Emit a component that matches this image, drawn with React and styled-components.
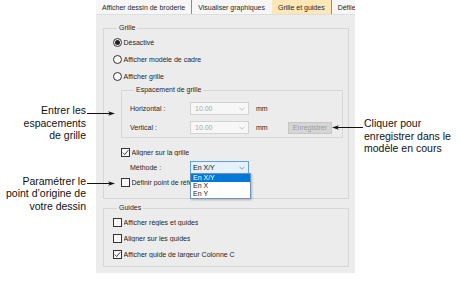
import React from "react";
import styled, { createGlobalStyle } from "styled-components";

const GlobalStyle = createGlobalStyle`
  body {
    margin: 0;
    background: #fff;
  }
`;

const Page = styled.div`
  display: flex;
  width: 461px;
  height: 288px;
  overflow: hidden;
  font-family: "Liberation Sans", Arial, sans-serif;
`;

const NotesLeft = styled.div`
  width: 88px;
  flex: none;
  box-sizing: border-box;
  padding: 104px 2px 0 0;
  display: flex;
  flex-direction: column;
  align-items: flex-end;
  gap: 33px;
`;

const NotesRight = styled.div`
  flex: 1;
  padding: 117px 0 0 9px;
`;

const Note = styled.div`
  position: relative;
  font-size: 10.5px;
  line-height: 12.5px;
  color: #111;
  white-space: nowrap;
  text-align: ${(p) => (p.$side === "left" ? "right" : "left")};
`;

const ArrowSvg = styled.svg`
  position: absolute;
  top: ${(p) => p.$top}px;
  ${(p) =>
    p.$side === "left"
      ? "left: calc(100% + 1px);"
      : "right: calc(100% + 1px); transform: scaleX(-1);"}
`;

const Dialog = styled.div`
  flex: none;
  align-self: flex-start;
  width: 259px;
  margin-left: 8px;
  background: #ececec;
  font-size: 7px;
  color: #1f1f1f;
`;

const TabBar = styled.div`
  display: flex;
  height: 15px;
  box-sizing: border-box;
  background: #f6f6f6;
  border-bottom: 1px solid #dedede;
  overflow: hidden;
  white-space: nowrap;
`;

const Tab = styled.div`
  display: flex;
  align-items: center;
  flex: none;
  padding: 0 6px;
  background: ${(p) => (p.$active ? "#fde7b7" : "transparent")};
  border-right: 1px solid ${(p) => (p.$sep ? "#8c8c8c" : "transparent")};
`;

const Body = styled.div`
  display: flex;
  flex-direction: column;
  gap: 5px;
  padding: 9px 6px 6px 7px;
`;

const Group = styled.fieldset`
  margin: ${(p) => (p.$inset ? "1.5px 0 0 8px" : "0")};
  padding: ${(p) => p.$pad};
  border: 1px solid #d6d6d6;
  min-width: 0;
`;

const Legend = styled.legend`
  margin-left: 4px;
  padding: 0 2px;
  font-size: 7px;
  line-height: 8px;
`;

const Row = styled.div`
  position: relative;
  display: flex;
  align-items: center;
  height: ${(p) => p.$h}px;
  margin-left: ${(p) => p.$indent || 0}px;
  margin-top: ${(p) => p.$top || 0}px;
  white-space: nowrap;
`;

const RadioDot = styled.span`
  flex: none;
  display: flex;
  align-items: center;
  justify-content: center;
  width: 9px;
  height: 9px;
  box-sizing: border-box;
  margin-right: 1.5px;
  border: 1px solid #333;
  border-radius: 50%;
  background: #f8f8f8;
  &::after {
    content: "";
    width: 5px;
    height: 5px;
    border-radius: 50%;
    background: ${(p) => (p.$on ? "#222" : "transparent")};
  }
`;

const Box = styled.span`
  flex: none;
  display: flex;
  align-items: center;
  justify-content: center;
  width: 9px;
  height: 9px;
  box-sizing: border-box;
  margin-right: 1.5px;
  border: 1px solid #333;
  background: #f8f8f8;
`;

const Caption = styled.span`
  overflow: hidden;
  max-width: ${(p) => (p.$clip ? `${p.$clip}px` : "none")};
`;

const FieldLabel = styled.span`
  flex: none;
  width: 60px;
`;

const Combo = styled.div`
  position: relative;
  flex: none;
  display: flex;
  align-items: center;
  width: 59px;
  height: 13px;
  box-sizing: border-box;
  padding: 0 3px 0 ${(p) => (p.$focus ? 2 : 4)}px;
  border: 1px solid ${(p) => (p.$focus ? "#5fa0df" : "#d3d3d3")};
  background: ${(p) => (p.$focus ? "#e5f1fb" : "#f7f7f7")};
  color: ${(p) => (p.$disabled ? "#a8a8a8" : "#111")};
  z-index: 1;
`;

const Chevron = styled.svg`
  margin-left: auto;
`;

const Unit = styled.span`
  margin-left: 7px;
`;

const Button = styled.button`
  margin-left: auto;
  height: 12px;
  padding: 0 4px;
  font-family: inherit;
  font-size: 7px;
  line-height: 10px;
  color: #9d9d9d;
  background: #d5d5d5;
  border: 1px solid #c6c6c6;
`;

const DropList = styled.div`
  position: absolute;
  top: 100%;
  left: -1px;
  width: 61px;
  box-sizing: border-box;
  background: #fff;
  border: 1px solid #6f93bb;
  box-shadow: 1px 1px 2px rgba(0, 0, 0, 0.25);
`;

const DropItem = styled.div`
  height: 8px;
  line-height: 8px;
  padding: 0 2px;
  background: ${(p) => (p.$sel ? "#0078d7" : "transparent")};
  color: ${(p) => (p.$sel ? "#fff" : "#1a1a1a")};
`;

function Arrow({ side, length, top }) {
  return (
    <ArrowSvg $side={side} $top={top} width={length} height="7" viewBox={`0 0 ${length} 7`}>
      <line x1="0" y1="3.5" x2={length - 3} y2="3.5" stroke="#111" strokeWidth="1" />
      <polygon
        points={`${length - 7},1.2 ${length},3.5 ${length - 7},5.8 ${length - 5},3.5`}
        fill="#111"
      />
    </ArrowSvg>
  );
}

function Radio({ on, children }) {
  return (
    <Row $h={17}>
      <RadioDot $on={on} />
      {children}
    </Row>
  );
}

function Check({ on, indent, h, clip, children }) {
  return (
    <Row $h={h} $indent={indent}>
      <Box>
        {on && (
          <svg width="7" height="7" viewBox="0 0 7 7">
            <path d="M0.8 3.6 L2.7 5.6 L6.3 1.2" fill="none" stroke="#333" strokeWidth="0.9" />
          </svg>
        )}
      </Box>
      <Caption $clip={clip}>{children}</Caption>
    </Row>
  );
}

function Select({ value, disabled, focus, children }) {
  return (
    <Combo $disabled={disabled} $focus={focus}>
      {value}
      <Chevron width="6" height="4" viewBox="0 0 6 4">
        <path d="M0.5 0.8 L3 3.2 L5.5 0.8" fill="none" stroke={focus ? "#6b8fb3" : "#b5b5b5"} strokeWidth="0.8" />
      </Chevron>
      {children}
    </Combo>
  );
}

export default function App() {
  return (
    <Page>
      <GlobalStyle />
      <NotesLeft>
        <Note $side="left">
          Entrer les
          <br />
          espacements
          <br />
          de grille
          <Arrow side="left" length={28} top={5.5} />
        </Note>
        <Note $side="left">
          Paramétrer le
          <br />
          point d’origine de
          <br />
          votre dessin
          <Arrow side="left" length={28} top={5.5} />
        </Note>
      </NotesLeft>

      <Dialog>
        <TabBar>
          <Tab $sep>Afficher dessin de broderie</Tab>
          <Tab>Visualiser graphiques</Tab>
          <Tab $active $sep>Grille et guides</Tab>
          <Tab>Défiler</Tab>
        </TabBar>
        <Body>
          <Group $pad="1.5px 5px 8px 9px">
            <Legend>Grille</Legend>
            <Radio on>Désactivé</Radio>
            <Radio>Afficher modèle de cadre</Radio>
            <Radio>Afficher grille</Radio>
            <Group $inset $pad="8px 10px 3px 8px">
              <Legend>Espacement de grille</Legend>
              <Row $h={13}>
                <FieldLabel>Horizontal :</FieldLabel>
                <Select value="10.00" disabled />
                <Unit>mm</Unit>
              </Row>
              <Row $h={13} $top={6}>
                <FieldLabel>Vertical :</FieldLabel>
                <Select value="10.00" disabled />
                <Unit>mm</Unit>
                <Button disabled>Enregistrer</Button>
              </Row>
            </Group>
            <Row $h={7} />
            <Check on indent={8} h={15}>Aligner sur la grille</Check>
            <Row $h={15} $indent={17}>
              <FieldLabel>Méthode :</FieldLabel>
              <Select value="En X/Y" focus>
                <DropList>
                  <DropItem $sel>En X/Y</DropItem>
                  <DropItem>En X</DropItem>
                  <DropItem>En Y</DropItem>
                </DropList>
              </Select>
            </Row>
            <Check indent={8} h={15} clip={58}>Définir point de référence</Check>
          </Group>

          <Group $pad="2px 5px 4px 9px">
            <Legend>Guides</Legend>
            <Check h={16}>Afficher règles et guides</Check>
            <Check h={16}>Aligner sur les guides</Check>
            <Check on h={16}>Afficher guide de largeur Colonne C</Check>
          </Group>
        </Body>
      </Dialog>

      <NotesRight>
        <Note $side="right">
          Cliquer pour
          <br />
          enregistrer dans le
          <br />
          modèle en cours
          <Arrow side="right" length={31} top={6.5} />
        </Note>
      </NotesRight>
    </Page>
  );
}
